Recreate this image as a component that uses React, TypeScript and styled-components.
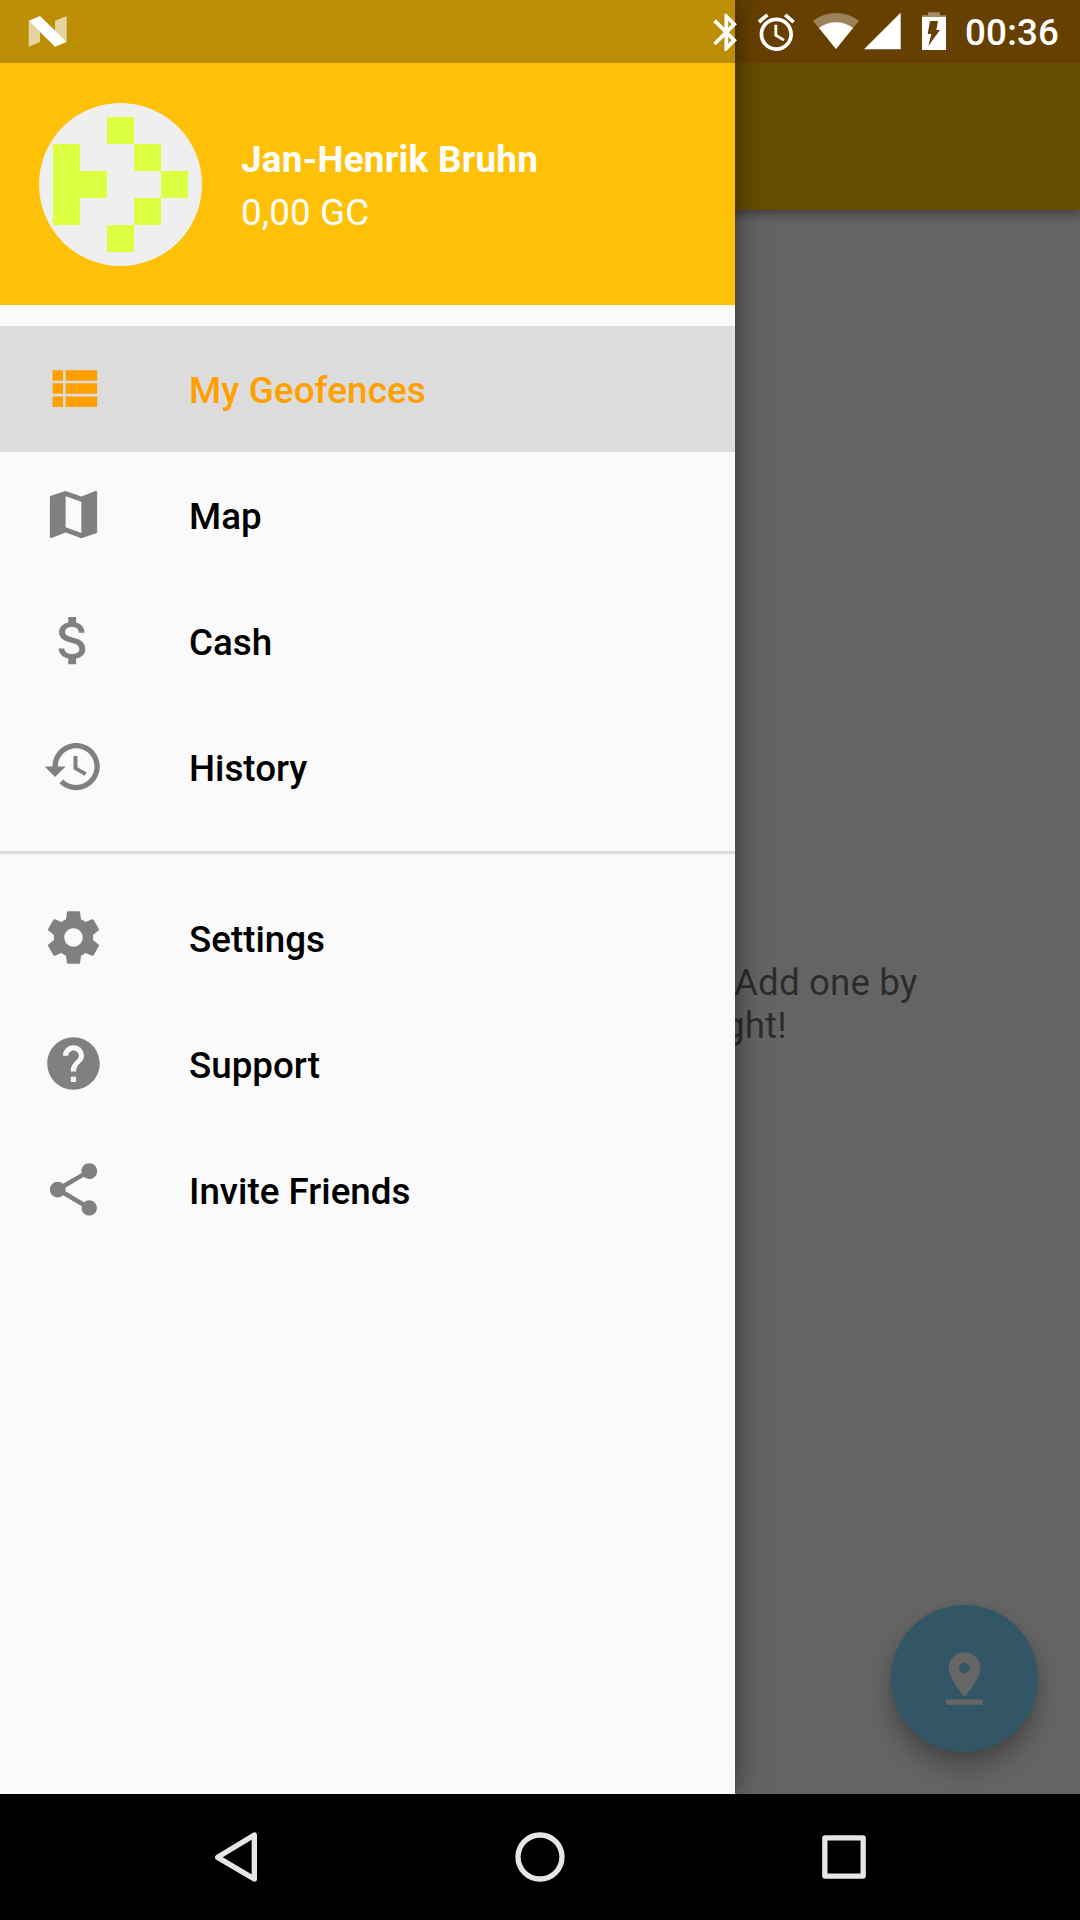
import React from "react";
import styled, { createGlobalStyle } from "styled-components";

const GlobalStyle = createGlobalStyle`
  body {
    margin: 0;
    background: #000;
    font-family: Roboto, "Noto Sans", sans-serif;
  }
`;

const Screen = styled.div`
  display: grid;
  grid-template: 1794px 126px / 1080px;
  width: 1080px;
  height: 1920px;
  overflow: hidden;
`;

const Page = styled.div`
  grid-area: 1 / 1;
  position: relative;
  display: flex;
  flex-direction: column;
  overflow: hidden;
  background: #fafafa;
`;

const PageStatus = styled.div`
  flex: 0 0 63px;
  background: #ffa000;
`;

const AppBar = styled.header`
  flex: 0 0 147px;
  background: #ffc107;
  box-shadow: 0 4px 11px rgba(0, 0, 0, 0.4);
  clip-path: inset(0 0 -30px 0);
`;

const EmptyState = styled.p`
  margin: 751px 0 0;
  padding-left: 734px;
  font-size: 36.75px;
  line-height: 43px;
  letter-spacing: 0.12px;
  color: rgba(0, 0, 0, 0.56);
`;

const EmptyLine = styled.span<{ $pull?: number }>`
  display: block;
  margin-left: ${(p) => -(p.$pull ?? 0)}px;
`;

const Fab = styled.button`
  position: absolute;
  right: 42px;
  bottom: 42px;
  display: grid;
  place-items: center;
  width: 147px;
  height: 147px;
  padding: 0;
  border: 0;
  border-radius: 50%;
  background: #7dd7ff;
  color: #fff;
  box-shadow: 0 16px 26px rgba(0, 0, 0, 0.26), 0 3px 12px rgba(0, 0, 0, 0.1);
`;

const Scrim = styled.div`
  grid-area: 1 / 1;
  z-index: 1;
  background: rgba(0, 0, 0, 0.6);
`;

const Drawer = styled.aside`
  grid-area: 1 / 1;
  z-index: 2;
  display: flex;
  flex-direction: column;
  width: 735px;
  background: #fafafa;
  box-shadow: 0 0 26px rgba(0, 0, 0, 0.5);
`;

const DrawerStatus = styled.div`
  flex: 0 0 63px;
  background: #bb8e06;
`;

const Account = styled.div`
  display: flex;
  flex: 0 0 242px;
  align-items: flex-start;
  gap: 39px;
  box-sizing: border-box;
  padding: 40px 39px 0;
  background: #ffc107;
  color: #fff;
`;

const Avatar = styled.div`
  display: grid;
  grid-template: repeat(5, 27px) / repeat(5, 27px);
  place-content: center;
  width: 163px;
  height: 163px;
  border-radius: 50%;
  background: #efefef;
`;

const Pixel = styled.span<{ $on: boolean }>`
  background: ${(p) => (p.$on ? "#ddff41" : "transparent")};
`;

const AccountText = styled.div`
  display: flex;
  flex-direction: column;
  gap: 10px;
  padding-top: 35px;
  font-size: 36.75px;
  line-height: 43px;
`;

const Name = styled.strong`
  font-weight: 700;
  letter-spacing: 0.3px;
`;

const Balance = styled.span`
  font-weight: 400;
  letter-spacing: 0.15px;
`;

const Menu = styled.nav`
  display: flex;
  flex-direction: column;
  padding-top: 21px;
`;

const Divider = styled.div`
  height: 3px;
  margin: 21px 0;
  background: #dbdbdb;
`;

const MenuItem = styled.a<{ $active?: boolean }>`
  display: flex;
  align-items: flex-start;
  gap: 84px;
  height: 126px;
  box-sizing: border-box;
  padding: 31px 42px 0;
  background: ${(p) => (p.$active ? "#dcdcdc" : "transparent")};
  color: ${(p) => (p.$active ? "#ffa000" : "#808080")};
`;

const MenuLabel = styled.span<{ $active?: boolean }>`
  padding-top: 12px;
  font-size: 36.75px;
  font-weight: 500;
  line-height: 43px;
  letter-spacing: ${(p) => (p.$active ? "0.13px" : "0")};
  color: ${(p) => (p.$active ? "#ffa000" : "#000")};
`;

const StatusBar = styled.div`
  grid-area: 1 / 1;
  z-index: 3;
  display: flex;
  align-items: flex-start;
  height: 63px;
  color: #fff;
`;

const Glyph = styled.svg<{ $w: number; $h: number; $ml?: number; $mt?: number }>`
  display: block;
  flex: none;
  width: ${(p) => p.$w}px;
  height: ${(p) => p.$h}px;
  margin: ${(p) => p.$mt ?? 0}px 0 0 ${(p) => p.$ml ?? 0}px;
  fill: currentColor;
`;

const Clock = styled.time`
  margin: 11px 0 0 19px;
  font-size: 36.75px;
  font-weight: 500;
  line-height: 43px;
  letter-spacing: 0.2px;
`;

const NavBar = styled.div`
  grid-area: 2 / 1;
  display: grid;
  grid-template-columns: repeat(3, 304px);
  justify-content: center;
  align-items: center;
  justify-items: center;
  background: #000;
`;

const NavIcon = styled.svg`
  display: block;
  width: 60px;
  height: 60px;
  fill: none;
  stroke: #e6e6e6;
  stroke-width: 16;
`;

const identicon = ["..#..", "#..#.", "##..#", "#..#.", "..#.."].join("");

const icons = {
  list: "M4 14h4v-4H4v4zm0 5h4v-4H4v4zM4 9h4V5H4v4zm5 5h12v-4H9v4zm0 5h12v-4H9v4zM9 5v4h12V5H9z",
  map: "M20.5 3l-.16.03L15 5.1 9 3 3.36 4.9c-.21.07-.36.25-.36.48V20.5c0 .28.22.5.5.5l.16-.03L9 18.9l6 2.1 5.64-1.9c.21-.07.36-.25.36-.48V3.5c0-.28-.22-.5-.5-.5zM15 19l-6-2.11V5l6 2.11V19z",
  cash: "M11.8 10.9c-2.27-.59-3-1.2-3-2.15 0-1.09 1.01-1.85 2.7-1.85 1.78 0 2.44.85 2.5 2.1h2.21c-.07-1.72-1.12-3.3-3.21-3.81V3h-3v2.16c-1.94.42-3.5 1.68-3.5 3.61 0 2.31 1.91 3.46 4.7 4.13 2.5.6 3 1.48 3 2.41 0 .69-.49 1.79-2.7 1.79-2.06 0-2.87-.92-2.98-2.1h-2.2c.12 2.19 1.76 3.42 3.68 3.83V21h3v-2.15c1.95-.37 3.5-1.5 3.5-3.55 0-2.84-2.43-3.81-4.7-4.4z",
  history:
    "M13 3c-4.97 0-9 4.03-9 9H1l3.89 3.89.07.14L9 12H6c0-3.87 3.13-7 7-7s7 3.13 7 7-3.13 7-7 7c-1.93 0-3.68-.79-4.94-2.06l-1.42 1.42C8.27 19.99 10.51 21 13 21c4.97 0 9-4.03 9-9s-4.03-9-9-9zm-1 5v5l4.28 2.54.72-1.21-3.5-2.08V8H12z",
  settings:
    "M19.43 12.98c.04-.32.07-.64.07-.98s-.03-.66-.07-.98l2.11-1.65c.19-.15.24-.42.12-.64l-2-3.46c-.12-.22-.39-.3-.61-.22l-2.49 1c-.52-.4-1.08-.73-1.69-.98l-.38-2.65C14.46 2.18 14.25 2 14 2h-4c-.25 0-.46.18-.49.42l-.38 2.65c-.61.25-1.17.59-1.69.98l-2.49-1c-.23-.09-.49 0-.61.22l-2 3.46c-.13.22-.07.49.12.64l2.11 1.65c-.04.32-.07.65-.07.98s.03.66.07.98l-2.11 1.65c-.19.15-.24.42-.12.64l2 3.46c.12.22.39.3.61.22l2.49-1c.52.4 1.08.73 1.69.98l.38 2.65c.03.24.24.42.49.42h4c.25 0 .46-.18.49-.42l.38-2.65c.61-.25 1.17-.59 1.69-.98l2.49 1c.23.09.49 0 .61-.22l2-3.46c.12-.22.07-.49-.12-.64l-2.11-1.65zM12 15.5c-1.93 0-3.5-1.57-3.5-3.5s1.57-3.5 3.5-3.5 3.5 1.57 3.5 3.5-1.57 3.5-3.5 3.5z",
  help: "M12 2C6.48 2 2 6.48 2 12s4.48 10 10 10 10-4.48 10-10S17.52 2 12 2zm1 17h-2v-2h2v2zm2.07-7.75l-.9.92C13.45 12.9 13 13.5 13 15h-2v-.5c0-1.1.45-2.1 1.17-2.83l1.24-1.26c.37-.36.59-.86.59-1.41 0-1.1-.9-2-2-2s-2 .9-2 2H8c0-2.21 1.79-4 4-4s4 1.79 4 4c0 .88-.36 1.68-.93 2.25z",
  share:
    "M18 16.08c-.76 0-1.44.3-1.96.77L8.91 12.7c.05-.23.09-.46.09-.7s-.04-.47-.09-.7l7.05-4.11c.54.5 1.25.81 2.04.81 1.66 0 3-1.34 3-3s-1.34-3-3-3-3 1.34-3 3c0 .24.04.47.09.7L8.04 9.81C7.5 9.31 6.79 9 6 9c-1.66 0-3 1.34-3 3s1.34 3 3 3c.79 0 1.5-.31 2.04-.81l7.12 4.16c-.05.21-.08.43-.08.65 0 1.61 1.31 2.92 2.92 2.92 1.61 0 2.92-1.31 2.92-2.92s-1.31-2.92-2.92-2.92z",
  pin: "M18 8c0-3.31-2.69-6-6-6S6 4.69 6 8c0 4.5 6 11 6 11s6-6.5 6-11zm-8 0c0-1.1.9-2 2-2s2 .9 2 2-.89 2-2 2c-1.1 0-2-.9-2-2zM5 20v2h14v-2H5z",
  bluetooth:
    "M17.71 7.71L12 2h-1v7.59L6.41 5 5 6.41 10.59 12 5 17.59 6.41 19 11 14.41V22h1l5.71-5.71-4.3-4.29 4.3-4.29zM13 5.83l1.88 1.88L13 9.59V5.83zm1.88 10.46L13 18.17v-3.76l1.88 1.88z",
  alarm:
    "M22 5.72l-4.6-3.86-1.29 1.53 4.6 3.86L22 5.72zM7.88 3.39L6.6 1.86 2 5.71l1.29 1.53 4.59-3.85zM12.5 8H11v6l4.75 2.85.75-1.23-4-2.37V8zM12 4c-4.97 0-9 4.03-9 9s4.02 9 9 9c4.97 0 9-4.03 9-9s-4.03-9-9-9zm0 16c-3.87 0-7-3.13-7-7s3.13-7 7-7 7 3.13 7 7-3.13 7-7 7z",
};

type IconName = keyof typeof icons;

const primary: { icon: IconName; label: string; active?: boolean }[] = [
  { icon: "list", label: "My Geofences", active: true },
  { icon: "map", label: "Map" },
  { icon: "cash", label: "Cash" },
  { icon: "history", label: "History" },
];

const secondary: typeof primary = [
  { icon: "settings", label: "Settings" },
  { icon: "help", label: "Support" },
  { icon: "share", label: "Invite Friends" },
];

const Icon = ({ name }: { name: IconName }) => (
  <Glyph $w={63} $h={63} viewBox="0 0 24 24">
    <path d={icons[name]} />
  </Glyph>
);

const Items = ({ items }: { items: typeof primary }) => (
  <>
    {items.map(({ icon, label, active }) => (
      <MenuItem key={label} $active={active}>
        <Icon name={icon} />
        <MenuLabel $active={active}>{label}</MenuLabel>
      </MenuItem>
    ))}
  </>
);

export default function App() {
  return (
    <>
      <GlobalStyle />
      <Screen>
        <Page>
          <PageStatus />
          <AppBar />
          <EmptyState>
            <EmptyLine>Add one by</EmptyLine>
            <EmptyLine $pull={10}>ght!</EmptyLine>
          </EmptyState>
          <Fab aria-label="Add geofence">
            <Icon name="pin" />
          </Fab>
        </Page>

        <Scrim />

        <Drawer>
          <DrawerStatus />
          <Account>
            <Avatar>
              {identicon.split("").map((cell, i) => (
                <Pixel key={i} $on={cell === "#"} />
              ))}
            </Avatar>
            <AccountText>
              <Name>Jan-Henrik Bruhn</Name>
              <Balance>0,00 GC</Balance>
            </AccountText>
          </Account>
          <Menu>
            <Items items={primary} />
            <Divider />
            <Items items={secondary} />
          </Menu>
        </Drawer>

        <StatusBar>
          <Glyph $w={40} $h={32} $ml={28} $mt={16} viewBox="84 48 120 96">
            <path opacity=".62" d="M86 62L120 95V126L86 140ZM165 62L200 48V126L165 93Z" />
            <path d="M86 62L120 48L200 126L165 140Z" />
          </Glyph>
          <Glyph $w={44.6} $h={44.6} $ml={636.4} $mt={9.7} viewBox="0 0 24 24">
            <path d={icons.bluetooth} />
          </Glyph>
          <Glyph $w={44.6} $h={44.6} $ml={5.4} $mt={10} viewBox="0 0 24 24">
            <path d={icons.alarm} />
          </Glyph>
          <Glyph $w={46} $h={37} $ml={14} $mt={13} viewBox="369 39 138 111">
            <path opacity=".35" d="M438 147L369 62A115 115 0 0 1 507 62Z" />
            <path d="M438 147L387 84A85 85 0 0 1 489 84Z" />
          </Glyph>
          <Glyph $w={37} $h={37} $ml={5} $mt={13} viewBox="522 39 111 111">
            <path d="M522 148L632 148V38Z" />
          </Glyph>
          <Glyph $w={24} $h={38} $ml={21} $mt={12} viewBox="696 36 72 114">
            <path opacity=".4" d="M714 37H750V46H768V52H696V46H714Z" />
            <path
              fillRule="evenodd"
              d="M696 51H768V150H696ZM720 63L744 63L739 90H750L715 138L724 102H713Z"
            />
          </Glyph>
          <Clock>00:36</Clock>
        </StatusBar>

        <NavBar>
          <NavIcon viewBox="-90 -90 180 180" strokeLinejoin="round">
            <path d="M-55 1L55 -66V66Z" />
          </NavIcon>
          <NavIcon viewBox="-90 -90 180 180">
            <circle r="66" />
          </NavIcon>
          <NavIcon viewBox="-90 -90 180 180" strokeLinejoin="round">
            <rect x="-57.5" y="-57.5" width="115" height="115" rx="1" />
          </NavIcon>
        </NavBar>
      </Screen>
    </>
  );
}
